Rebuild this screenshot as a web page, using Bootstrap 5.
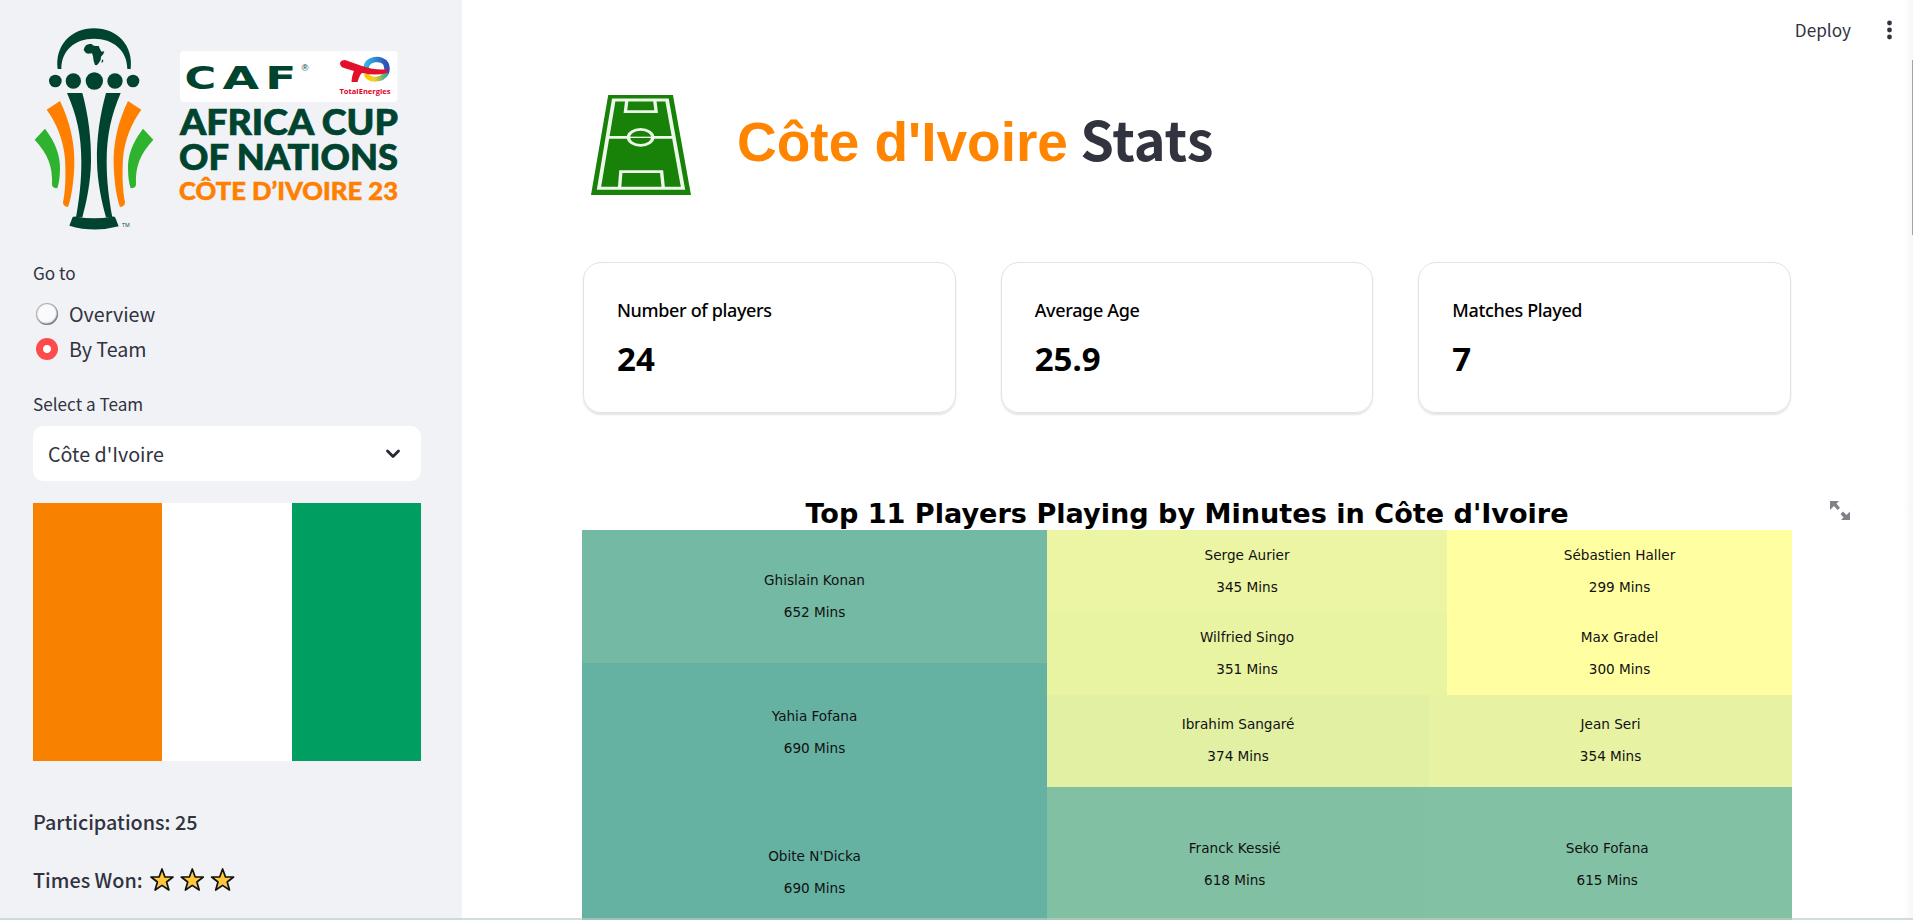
<!DOCTYPE html>
<html lang="en">
<head>
<meta charset="utf-8">
<meta name="viewport" content="width=device-width, initial-scale=1">
<title>Côte d'Ivoire Stats</title>
<link href="https://cdn.jsdelivr.net/npm/bootstrap@5.3.0/dist/css/bootstrap.min.css" rel="stylesheet">
<style>
body{font-family:"Noto Sans CJK SC",sans-serif;color:#31333f;background:#fff}
.app-side{width:462px;background:#f0f2f6;padding:20px 41px 0 33px}
.logo{width:388px;height:212px}
.lbl{font-size:17.150px;line-height:24px}
.opt{font-size:19.700px;line-height:35px;gap:11px;padding-left:3px}
.form-check-input.dot{width:22px;height:22px;margin:0;border:0;background:#fafafc;box-shadow:inset -1px -1.5px 1.5px #777a84,inset 0 0 1px 1px #a9abb3}
.form-check-input.dot:checked{background:radial-gradient(circle,#fff 3.6px,#ff4b4b 4.4px);box-shadow:none}
.picker{height:55px;border-radius:10px;background:#fff;font-size:19.700px;padding:0 20px 0 15px;margin-top:10px}
.flag{height:258px}
.f-o{background:#f98100}.f-g{background:#009e60}
.fact{font-size:19.800px;line-height:30px;font-weight:500}
.app-main{padding:0 121px 0 120px}
.topbar{height:60px;margin-right:-121px;padding-right:18px;font-size:17.200px}
.hero{height:120px;margin-top:25px;padding-left:9px;gap:46px}
.hero h1{font-size:54px;line-height:70px;font-weight:700;color:#31333f;padding-bottom:11px}
.hero h1 span{font-family:"Liberation Sans",sans-serif;font-size:55px;color:#ff8500}
.stats{gap:45px;margin-top:57px;padding:0 1px 0 1px}
.stat{height:151px;border:1px solid #e2e3e5;border-radius:18px;box-shadow:0 2px 2px rgba(0,0,0,.11);padding:34px 33px;font-family:"Noto Sans",sans-serif;color:#000}
.stat-l{font-size:18px;line-height:26px;font-weight:500;letter-spacing:-.35px}
.stat-v{font-size:33px;line-height:44px;font-weight:700;margin-top:14px}
.chart{margin-top:81px;font-family:"DejaVu Sans",sans-serif;color:#000}
.chart h2{font-size:27.100px;line-height:33px;padding-top:3px;font-weight:700;margin:0;text-align:center;white-space:nowrap}
.tree{height:412px}
.cell{display:flex;flex-direction:column;align-items:center;justify-content:center;font-size:13.600px;line-height:32px;color:#111;padding-bottom:1px}
.expand{right:63px;top:500px}
.edge-b{left:0;right:0;bottom:0;height:2px;background:rgba(188,205,196,.65)}
.edge-r{right:0;top:0;bottom:0;width:10px;background:linear-gradient(90deg,#fff0,#f5f6f8)}
.thumb{right:0;top:60px;width:1px;height:175px;background:#a2a4ab}
</style>
</head>
<body class="overflow-hidden">
<div class="d-flex vh-100 position-relative overflow-hidden">
  <aside class="app-side flex-shrink-0">
    <svg class="logo d-block" viewBox="33 20 388 212">
      <g transform="translate(20 15) scale(.33333)">
        <g fill="#00432f">
          <path d="M113 162C104 92 153 40 222 40C292 40 341 92 332 162H322C322 106 279 71 222 71C165 71 124 106 124 162Z"/>
          <circle cx="106" cy="198" r="19"/><circle cx="160" cy="198" r="23"/><circle cx="223" cy="198" r="26"/><circle cx="285" cy="198" r="23"/><circle cx="339" cy="198" r="19"/>
          <path d="M199 90L208 87L216 87L218 91L226 93L236 93L241 104L245 110L253 109L250 117L243 125L242 135L236 145L230 151L225 150L221 138L219 124L216 115L204 116L197 113L191 105L194 96ZM249 133L250 139L245 145L245 137Z"/>
          <path d="M141 234H187C205 300 214 370 213 440C212 500 200 560 187 607H168C178 550 184 500 184 440C184 360 170 300 141 234Z"/>
          <path d="M302 234H258C240 300 229 370 231 440C232 500 245 560 258 607H277C267 550 260 500 260 440C260 360 274 300 302 234Z"/>
          <path d="M158 606Q163 604 169 605Q222 614 275 605Q283 603 286 608L296 634Q222 654 148 632Z"/>
        </g>
        <g id="wing">
          <path fill="#ff7f00" d="M80 284L120 258C150 320 165 385 163 450C161 500 155 545 144 576Q129 575 129 562C136 530 138 480 135 430C130 375 110 325 80 284Z"/>
          <path fill="#2fb32f" d="M44 374L75 341C105 380 121 420 120 460C120 485 117 505 112 520Q96 520 96 508C98 455 85 418 44 374Z"/>
        </g>
        <use href="#wing" transform="translate(444 0) scale(-1 1)"/>
        <text x="306" y="635" font-family="Open Sans" font-size="16" textLength="23" lengthAdjust="spacingAndGlyphs" fill="#00432f">TM</text>
      </g>
      <rect x="180" y="51" width="217.500" height="51" rx="4" fill="#fff"/>
      <g font-family="DejaVu Sans" font-weight="700" font-size="32" fill="#00432f">
        <text transform="translate(184.500 88.500) scale(1.350 1)">C</text>
        <text transform="translate(222.500 88.500) scale(1.480 1)">A</text>
        <text transform="translate(265.200 88.500) scale(1.420 1)">F</text>
      </g>
      <text x="301.500" y="70.500" font-family="Liberation Sans" font-size="9.500" fill="#00432f">®</text>
      <defs>
        <linearGradient id="te1" x1="0" y1="0" x2="1" y2="0"><stop offset="0" stop-color="#35b4e5"/><stop offset="1" stop-color="#2a50b8"/></linearGradient>
        <linearGradient id="te2" x1="0" y1="0" x2="1" y2="0"><stop offset="0" stop-color="#ffc400"/><stop offset=".4" stop-color="#f0d020"/><stop offset="1" stop-color="#35a8a0"/></linearGradient>
      </defs>
      <path d="M366 68C367 58 382 57 386 64Q388 69 386 73" fill="none" stroke="url(#te1)" stroke-width="5.500"/>
      <path d="M366 74C369 81 382 81 386.500 73" fill="none" stroke="url(#te2)" stroke-width="5"/>
      <path d="M340 63Q341 60 345 60L362 66Q377 71 388 69L387 73Q376 76 362 73Q360 74 357.500 82H351.500Q352 75 354 71L344 68Q340 67 340 63Z" fill="#e2102b"/>
      <text x="339.500" y="93.500" font-family="Open Sans" font-weight="700" font-size="7.500" fill="#e2001f" textLength="51" lengthAdjust="spacingAndGlyphs">TotalEnergies</text>
      <g font-family="Lato" font-weight="900" fill="#00432f" stroke="#00432f" stroke-width=".7">
        <text x="180" y="134.700" font-size="36" textLength="218" lengthAdjust="spacingAndGlyphs">AFRICA CUP</text>
        <text x="179" y="169.500" font-size="36" textLength="219" lengthAdjust="spacingAndGlyphs">OF NATIONS</text>
        <text x="179" y="200" font-size="25.500" textLength="219" lengthAdjust="spacingAndGlyphs" fill="#ff7f00" stroke="#ff7f00" stroke-width=".5">CÔTE D’IVOIRE 23</text>
      </g>
    </svg>
    <div class="lbl" style="margin-top:29px">Go to</div>
    <div style="margin-top:11px">
      <label class="opt d-flex align-items-center"><input class="form-check-input dot" type="radio" name="p">Overview</label>
      <label class="opt d-flex align-items-center"><input class="form-check-input dot" type="radio" name="p" checked>By Team</label>
    </div>
    <div class="lbl" style="margin-top:26px">Select a Team</div>
    <div class="picker d-flex align-items-center justify-content-between"><span>Côte d'Ivoire</span>
      <svg width="16" height="10" viewBox="0 0 16 10" fill="none" stroke="#262730" stroke-width="2.800" stroke-linecap="round" stroke-linejoin="round"><path d="M2.500 2L8 7.500L13.500 2"/></svg>
    </div>
    <div class="flag d-flex" style="margin-top:22px"><div class="f-o flex-fill"></div><div class="bg-white flex-fill"></div><div class="f-g flex-fill"></div></div>
    <div class="fact" style="margin-top:46px">Participations: 25</div>
    <div class="fact d-flex align-items-center" style="margin-top:28px"><span style="margin-right:7px">Times Won:</span>
      <svg width="86" height="26" viewBox="0 0 86 26"><defs><path id="st" d="M12 2L14.800 9.800L23 10L16.600 15L18.900 23L12 18.400L5.100 23L7.400 15L1 10L9.200 9.800Z" fill="#ffc83d" stroke="#111" stroke-width="1.700" stroke-linejoin="round"/></defs><use href="#st"/><use href="#st" x="30.300"/><use href="#st" x="60.600"/></svg>
    </div>
  </aside>
  <main class="app-main flex-grow-1">
    <header class="topbar d-flex justify-content-end align-items-center">
      <span style="margin-right:33px">Deploy</span>
      <svg width="11" height="20" viewBox="0 0 11 20" fill="#31333f"><circle cx="5.500" cy="3" r="2.400"/><circle cx="5.500" cy="10" r="2.400"/><circle cx="5.500" cy="17" r="2.400"/></svg>
    </header>
    <div class="hero d-flex align-items-center">
      <svg width="100" height="100" viewBox="0 0 238 300" preserveAspectRatio="none">
        <path fill="#178207" d="M41 0H195L238 300H0Z"/>
        <g fill="none" stroke="#eef8ea"><path d="M54 15H181L219 280H19Z" stroke-width="9"/><path d="M42 127H90M145 127H197" stroke-width="8"/><ellipse cx="118" cy="127" rx="29" ry="24" stroke-width="8"/><path d="M90 127H145" stroke-width="4"/><path d="M85 18L82 50H155L152 18M68 278L71 230H168L172 278" stroke-width="8"/></g>
      </svg>
      <h1 class="mb-0 text-nowrap"><span>Côte d'Ivoire</span> Stats</h1>
    </div>
    <div class="stats d-flex">
      <div class="stat flex-fill w-100"><div class="stat-l">Number of players</div><div class="stat-v">24</div></div>
      <div class="stat flex-fill w-100"><div class="stat-l">Average Age</div><div class="stat-v">25.9</div></div>
      <div class="stat flex-fill w-100"><div class="stat-l">Matches Played</div><div class="stat-v">7</div></div>
    </div>
    <div class="chart">
      <h2>Top 11 Players Playing by Minutes in Côte d'Ivoire</h2>
      <div class="tree d-flex">
        <div class="d-flex flex-column" style="width:38.43%">
          <div class="cell" style="height:132.500px;background:#74b9a3"><span>Ghislain Konan</span><span>652 Mins</span></div>
          <div class="cell" style="height:139.700px;background:#65b2a3"><span>Yahia Fofana</span><span>690 Mins</span></div>
          <div class="cell" style="height:139.800px;background:#65b2a3"><span>Obite N'Dicka</span><span>690 Mins</span></div>
        </div>
        <div class="d-flex flex-column flex-grow-1">
          <div class="d-flex" style="height:164.500px">
            <div style="width:53.700%">
              <div class="cell" style="height:82px;background:#ebf5a3"><span>Serge Aurier</span><span>345 Mins</span></div>
              <div class="cell" style="height:82.500px;background:#e9f4a2"><span>Wilfried Singo</span><span>351 Mins</span></div>
            </div>
            <div class="flex-grow-1">
              <div class="cell" style="height:82px;background:#ffffa2"><span>Sébastien Haller</span><span>299 Mins</span></div>
              <div class="cell" style="height:82.500px;background:#ffffa2"><span>Max Gradel</span><span>300 Mins</span></div>
            </div>
          </div>
          <div class="d-flex" style="height:92.500px">
            <div class="cell" style="width:51.300%;background:#e1f0a3"><span>Ibrahim Sangaré</span><span>374 Mins</span></div>
            <div class="cell flex-grow-1" style="background:#e7f3a2"><span>Jean Seri</span><span>354 Mins</span></div>
          </div>
          <div class="d-flex" style="height:155px">
            <div class="cell" style="width:50.400%;background:#82c0a4"><span>Franck Kessié</span><span>618 Mins</span></div>
            <div class="cell flex-grow-1" style="background:#83c1a4"><span>Seko Fofana</span><span>615 Mins</span></div>
          </div>
        </div>
      </div>
    </div>
  </main>
  <svg class="expand position-absolute" width="20" height="21" viewBox="0 0 20 21" fill="#808288"><path d="M0 1H9L6.500 3.500L10 8L7.500 10L4 6L0 10ZM20 20H11L13.500 17.500L10.500 14L13 11.500L16.500 15L20 11.500Z"/></svg>
  <div class="edge-r position-absolute"></div>
  <div class="thumb position-absolute"></div>
  <div class="edge-b position-absolute"></div>
</div>
<script src="https://cdn.jsdelivr.net/npm/bootstrap@5.3.0/dist/js/bootstrap.bundle.min.js"></script>
</body>
</html>
